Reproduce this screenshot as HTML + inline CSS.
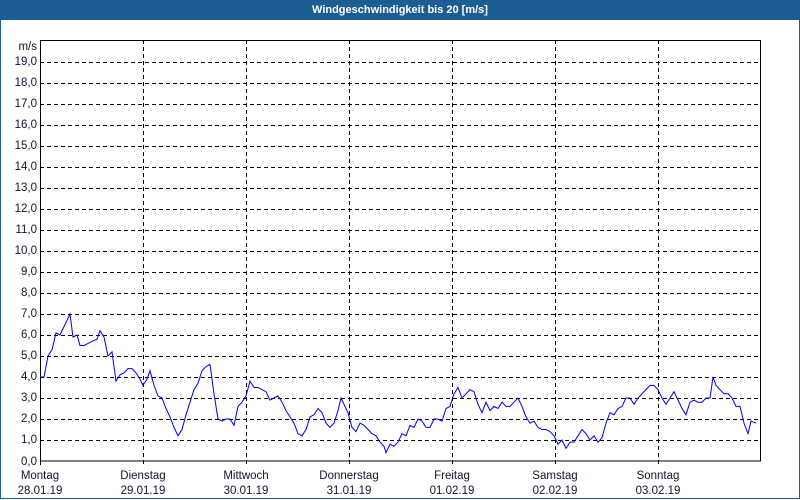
<!DOCTYPE html>
<html><head><meta charset="utf-8"><style>
html,body{margin:0;padding:0;width:800px;height:500px;overflow:hidden;background:#fff;font-family:"Liberation Sans",sans-serif;}
#t{position:absolute;left:0;top:0;width:800px;height:20px;background:#1c5e94;color:#fff;font-weight:bold;font-size:11px;text-align:center;line-height:20px}
#f{position:absolute;left:0;top:20px;width:798px;height:478px;border:1px solid #1c5e94;border-top:none}
svg{position:absolute;left:0;top:0}
text{font-family:"Liberation Sans",sans-serif;font-size:11.5px;fill:#0c1830}
</style></head><body>
<div id="t">Windgeschwindigkeit bis 20 [m/s]</div>
<div id="f"></div>
<svg width="800" height="500" id="s">
<g id="grid"></g>
<rect x="40.5" y="40.5" width="720" height="420.5" fill="none" stroke="#000" stroke-width="1"/>
<g text-anchor="end">
<text x="37" y="50">m/s</text>
<text x="37" y="65">19,0</text><text x="37" y="86">18,0</text><text x="37" y="107">17,0</text><text x="37" y="128">16,0</text><text x="37" y="149">15,0</text><text x="37" y="170">14,0</text><text x="37" y="191">13,0</text><text x="37" y="212">12,0</text><text x="37" y="233">11,0</text><text x="37" y="254">10,0</text><text x="37" y="275">9,0</text><text x="37" y="296">8,0</text><text x="37" y="317">7,0</text><text x="37" y="338">6,0</text><text x="37" y="359">5,0</text><text x="37" y="380">4,0</text><text x="37" y="401">3,0</text><text x="37" y="422">2,0</text><text x="37" y="443">1,0</text><text x="37" y="465">0,0</text>
</g>
<g text-anchor="middle">
<text x="40" y="479">Montag</text><text x="40" y="494">28.01.19</text>
<text x="143" y="479">Dienstag</text><text x="143" y="494">29.01.19</text>
<text x="246" y="479">Mittwoch</text><text x="246" y="494">30.01.19</text>
<text x="349" y="479">Donnerstag</text><text x="349" y="494">31.01.19</text>
<text x="452" y="479">Freitag</text><text x="452" y="494">01.02.19</text>
<text x="555" y="479">Samstag</text><text x="555" y="494">02.02.19</text>
<text x="658" y="479">Sonntag</text><text x="658" y="494">03.02.19</text>
</g>
<polyline id="p" fill="none" stroke="#0000ee" stroke-width="1"/>
</svg>
<script>
var g=document.getElementById('grid'),h='';
for(var i=1;i<=19;i++){var y=461-21*i+0.5;h+='<line x1="40" x2="760" y1="'+y+'" y2="'+y+'" stroke="#000" stroke-dasharray="4,3"/>';}
for(var d=1;d<=6;d++){var x=40+103*d+0.5;h+='<line x1="'+x+'" x2="'+x+'" y1="40" y2="465" stroke="#000" stroke-dasharray="4,3"/>';}
h+='<line x1="40.5" x2="40.5" y1="461" y2="465" stroke="#000"/>';
g.innerHTML=h;
var d=[40,4.0,44,4.0,48,5.0,52,5.3,56,6.1,60,6.0,64,6.4,68,6.8,70,7.0,73,5.9,77,6.0,80,5.5,84,5.5,88,5.6,92,5.7,97,5.8,100,6.2,104,5.9,108,5.0,112,5.2,116,3.8,120,4.1,124,4.2,128,4.4,132,4.4,136,4.2,140,3.9,143,3.6,147,3.9,150,4.3,154,3.6,158,3.1,162,3.0,166,2.5,170,2.1,174,1.6,178,1.2,182,1.5,186,2.2,190,2.8,194,3.4,198,3.7,202,4.3,206,4.5,210,4.6,214,3.2,218,2.0,222,1.9,226,2.0,230,2.0,234,1.7,238,2.6,242,2.8,246,3.1,250,3.8,254,3.5,258,3.5,262,3.4,266,3.3,270,2.9,274,3.0,278,3.1,282,2.8,286,2.4,290,2.1,294,1.8,298,1.3,302,1.2,306,1.5,310,2.1,314,2.2,318,2.5,322,2.3,326,1.8,330,1.6,334,1.8,338,2.4,341,3.0,344,2.7,348,2.3,352,1.6,356,1.4,360,1.8,364,1.7,368,1.5,372,1.3,376,1.2,380,0.9,384,0.7,386,0.4,390,0.8,394,0.7,398,0.9,402,1.3,406,1.2,410,1.7,414,1.6,418,2.0,422,1.9,426,1.6,430,1.6,434,2.0,438,2.0,442,1.9,446,2.5,450,2.6,454,3.2,458,3.5,462,3.0,466,3.2,470,3.4,474,3.3,478,2.7,482,2.3,486,2.8,490,2.4,494,2.6,498,2.5,502,2.8,506,2.6,510,2.6,514,2.8,518,3.0,522,2.6,526,2.1,530,1.8,534,1.9,538,1.6,542,1.5,546,1.5,550,1.4,554,1.2,558,0.8,562,1.0,566,0.6,570,0.9,574,0.9,578,1.2,582,1.5,586,1.3,590,1.0,594,1.2,598,0.9,602,1.1,606,1.8,610,2.3,614,2.2,618,2.5,622,2.6,626,3.0,630,3.0,634,2.7,638,3.0,642,3.2,646,3.4,650,3.6,654,3.6,658,3.4,662,3.0,666,2.7,670,3.0,674,3.3,678,2.9,682,2.5,686,2.2,690,2.8,694,2.9,698,2.8,702,2.8,706,3.0,710,3.0,713,4.0,716,3.6,720,3.4,724,3.2,728,3.2,732,3.0,736,2.6,740,2.6,744,1.8,748,1.3,751,1.9,756,1.8];
var pts=[];for(var k=0;k<d.length;k+=2)pts.push(d[k]+','+(461-21*d[k+1]).toFixed(1));
document.getElementById('p').setAttribute('points',pts.join(' '));
</script>
</body></html>
